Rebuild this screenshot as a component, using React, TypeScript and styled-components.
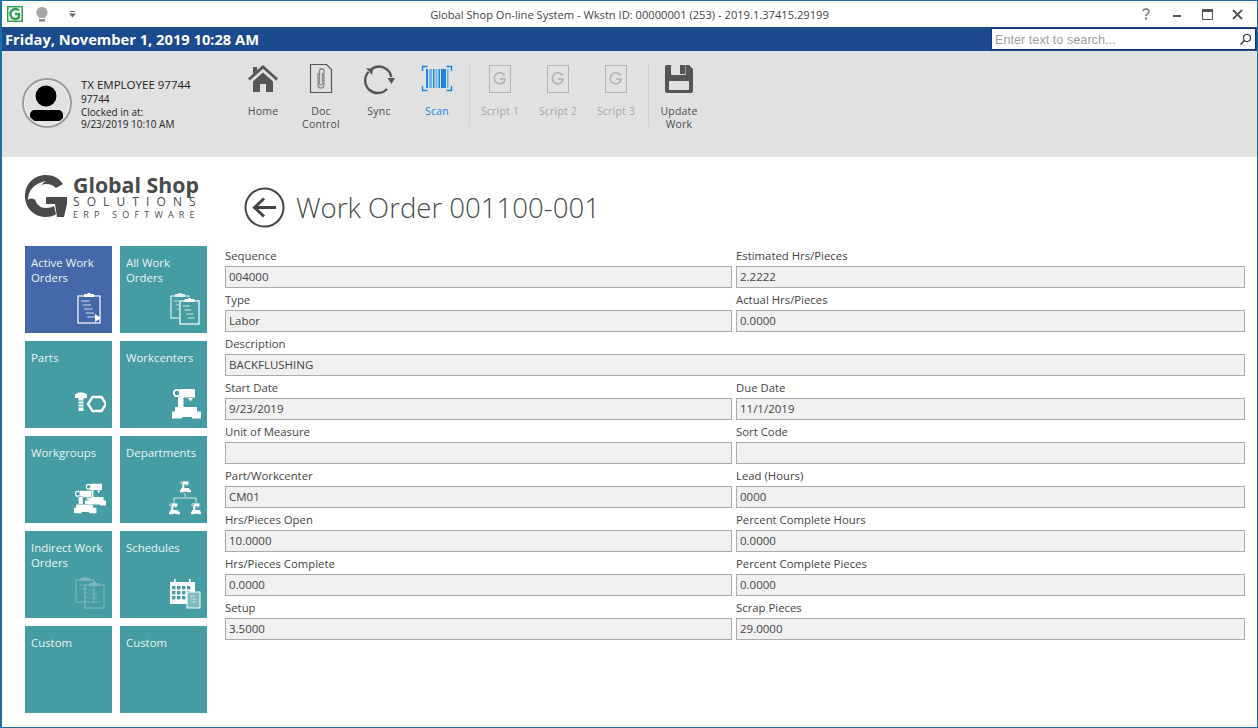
import React from 'react';
import styled, { createGlobalStyle } from 'styled-components';

const GlobalStyle = createGlobalStyle`
  html, body {
    margin: 0;
    padding: 0;
    height: 100%;
    background: #fff;
  }
  * {
    box-sizing: border-box;
  }
`;

const FONT = `"Open Sans", "Noto Sans", "Liberation Sans", sans-serif`;

const Win = styled.div`
  width: 1258px;
  height: 728px;
  border: 1px solid #1a6fa8;
  border-left-width: 2px;
  display: flex;
  flex-direction: column;
  overflow: hidden;
  background: #fff;
  font-family: ${FONT};
`;

const TitleBar = styled.div`
  height: 26px;
  flex: none;
  display: grid;
  grid-template-columns: 1fr auto 1fr;
  align-items: center;
  background: #fff;
`;

const QuickBar = styled.div`
  display: flex;
  align-items: center;
  padding-left: 5px;
  height: 100%;
`;

const QuickSlot = styled.div<{ $w: number }>`
  width: ${(p) => p.$w}px;
  display: flex;
  align-items: center;
  justify-content: center;
`;

const WinTitle = styled.div`
  font-size: 11.15px;
  color: #444;
  white-space: nowrap;
`;

const WinButtons = styled.div`
  display: flex;
  justify-content: flex-end;
  padding-right: 4px;
`;

const WinButton = styled.div`
  width: 30.5px;
  height: 22px;
  display: flex;
  align-items: center;
  justify-content: center;
`;

const DateBar = styled.div`
  height: 24px;
  flex: none;
  background: #1b4a8f;
  display: flex;
  align-items: center;
  justify-content: space-between;
  padding: 0 1px 0 3px;
`;

const DateText = styled.div`
  color: #fff;
  font-size: 14.7px;
  font-weight: 700;
`;

const SearchBox = styled.div`
  width: 265px;
  height: 22px;
  background: #fff;
  border: 1px solid #12366c;
  display: flex;
  align-items: center;
  justify-content: space-between;
  padding: 1px 3px 0 3px;
  font-family: "Liberation Sans", sans-serif;
  font-size: 12.7px;
  color: #a0a0a0;
`;

const Toolbar = styled.div`
  height: 106px;
  flex: none;
  background: #e1e1e1;
  display: flex;
  padding-top: 12px;
`;

const UserBlock = styled.div`
  width: 232px;
  flex: none;
  display: flex;
  align-items: flex-start;
  padding: 15px 0 0 20px;
  gap: 9px;
`;

const Avatar = styled.div`
  width: 50px;
  height: 50px;
  flex: none;
`;

const UserText = styled.div`
  color: #222;
  font-size: 10px;
  line-height: 12.5px;
  margin-top: -1px;
`;

const UserName = styled.div`
  font-size: 11.5px;
  line-height: 16px;
`;

const ToolItem = styled.div<{ $tone?: 'active' | 'off' }>`
  width: 58px;
  flex: none;
  display: flex;
  flex-direction: column;
  align-items: center;
  color: ${(p) => (p.$tone === 'active' ? '#1a86e0' : p.$tone === 'off' ? '#a6a6a6' : '#4d4d4d')};
`;

const ToolIcon = styled.div`
  height: 32px;
  margin-bottom: 10px;
  display: flex;
`;

const ToolLabel = styled.div`
  font-size: 10.5px;
  line-height: 13px;
  text-align: center;
  letter-spacing: 0.2px;
  white-space: pre-line;
`;

const ToolSep = styled.div`
  width: 1px;
  height: 64px;
  flex: none;
  background: #d2d2d2;
  margin: 0 1px 0 3px;
`;

const Content = styled.div`
  flex: 1;
  display: flex;
  min-height: 0;
`;

const Sidebar = styled.div`
  width: 223px;
  flex: none;
  padding-left: 23px;
  display: flex;
  flex-direction: column;
`;

const LogoRow = styled.div`
  height: 89px;
  flex: none;
  display: flex;
  padding-top: 18px;
  align-items: flex-start;
  gap: 6px;
  color: #4a4a4a;
`;

const LogoText = styled.div`
  display: flex;
  flex-direction: column;
  white-space: nowrap;
`;

const LogoName = styled.div`
  font-size: 21.3px;
  font-weight: 700;
  line-height: 21px;
  margin-top: -1px;
`;

const LogoSub = styled.div`
  font-size: 12px;
  line-height: 13px;
  letter-spacing: 7.1px;
`;

const LogoErp = styled.div`
  font-size: 9px;
  line-height: 13px;
  letter-spacing: 5.2px;
`;

const TileGrid = styled.div`
  display: grid;
  grid-template-columns: 87px 87px;
  grid-auto-rows: 87px;
  gap: 8px;
`;

const Tile = styled.div<{ $active?: boolean }>`
  background: ${(p) => (p.$active ? '#4468a8' : '#459ca3')};
  color: #e9f5f5;
  font-size: 11.4px;
  line-height: 15px;
  padding: 9px 6px 6px 6px;
  display: flex;
  flex-direction: column;
  justify-content: space-between;
  white-space: nowrap;
`;

const TileIcon = styled.svg`
  width: 40px;
  height: 40px;
  align-self: flex-end;
  flex: none;
`;

const Main = styled.div`
  flex: 1;
  min-width: 0;
  padding-right: 11px;
  display: flex;
  flex-direction: column;
`;

const Heading = styled.div`
  height: 88px;
  flex: none;
  display: flex;
  align-items: center;
  padding: 12px 0 0 19px;
  gap: 11px;
`;

const HeadingText = styled.h1`
  margin: 0;
  font-size: 27.6px;
  font-weight: 300;
  color: #4a4a4a;
  white-space: nowrap;
`;

const Form = styled.div`
  display: grid;
  grid-template-columns: 507px 509px;
  column-gap: 4px;
  grid-auto-rows: 44px;
`;

const Field = styled.div<{ $wide?: boolean }>`
  grid-column: ${(p) => (p.$wide ? '1 / -1' : 'auto')};
  display: flex;
  flex-direction: column;
`;

const FieldLabel = styled.label`
  height: 21px;
  font-size: 11.35px;
  line-height: 21px;
  color: #444;
`;

const FieldInput = styled.input`
  height: 22px;
  width: 100%;
  background: #f0f0f0;
  border: 1px solid #ababab;
  padding: 0 3px 2px;
  font-family: ${FONT};
  font-size: 11.5px;
  color: #444;
  outline: none;
`;

const Clipboard = ({ x, y, w, h, stroke = '#fff', fill = 'none' }: { x: number; y: number; w: number; h: number; stroke?: string; fill?: string }) => (
  <g stroke={stroke} fill={fill}>
    <rect x={x} y={y + 3} width={w} height={h - 3} strokeWidth="1.2" />
    <rect x={x + w / 2 - 5} y={y + 1} width={10} height={3} fill={stroke} stroke="none" />
    <rect x={x + w / 2 - 1.5} y={y} width={3} height={2} fill={stroke} stroke="none" />
    {[8, 12, 16, 20, 24].map((d, i) =>
      y + d < y + h - 2 ? (
        <line key={d} x1={x + 3 + i * 1.6} x2={x + w * 0.52 + i * 1.6} y1={y + d} y2={y + d} strokeWidth="1" opacity="0.8" />
      ) : null,
    )}
  </g>
);

const Machine = ({ x, y, s = 1, edge }: { x: number; y: number; s?: number; edge?: boolean }) => (
  <g transform={`translate(${x} ${y}) scale(${s})`} fill="#fff" stroke={edge ? '#459ca3' : 'none'} strokeWidth={edge ? 1.2 : 0} style={{ paintOrder: 'stroke' }}>
    <circle cx="5" cy="5" r="3.2" fill="none" stroke="#fff" strokeWidth="1.8" />
    <rect x="8" y="1" width="15" height="8.5" />
    <path d="M16 10h5l-2.5 3.500z" />
    <rect x="6" y="9" width="5.500" height="11" />
    <path d="M3 19h22v4.500h4.500v7H20v-1.500H10v1.500H0v-7h3z" />
  </g>
);

const Icons: Record<string, React.ReactNode> = {
  active: (
    <>
      <Clipboard x={12} y={6} w={22} h={30} />
      <path d="M29 27l6 4-6 4z" fill="#fff" />
    </>
  ),
  all: (
    <>
      <g opacity="0.85">
        <Clipboard x={10} y={6} w={18} h={25} />
      </g>
      <rect x="18" y="10" width="20" height="27" fill="#459ca3" />
      <Clipboard x={19} y={11} w={19} h={26} />
    </>
  ),
  parts: (
    <>
      <path d="M9 13c1-2 3-2.500 6-2.500s5 .5 6 2.500v3h-3.500v13h-5V16H9z" fill="#fff" />
      <path d="M12 19h6M12 22h6M12 25h6" stroke="#459ca3" strokeWidth="1" />
      <path d="M26.500 15h9l4.500 7-4.500 7h-9L22 22z" fill="none" stroke="#fff" strokeWidth="2.400" />
    </>
  ),
  workcenter: <Machine x={11} y={6} />,
  workgroup: (
    <>
      <Machine x={19} y={6} s={0.74} />
      <Machine x={8} y={13} s={0.76} edge />
    </>
  ),
  department: (
    <>
      <Machine x={19} y={4} s={0.37} />
      <path d="M24 16v4M13 26v-5h22v5" stroke="#cfe6e8" strokeWidth="1" fill="none" />
      <Machine x={8} y={26} s={0.37} />
      <Machine x={30} y={26} s={0.37} />
    </>
  ),
  indirect: (
    <g opacity="0.28">
      <Clipboard x={10} y={5} w={18} h={25} />
      <Clipboard x={19} y={10} w={19} h={26} />
    </g>
  ),
  schedule: (
    <>
      <rect x="9" y="10" width="25" height="22" fill="#fff" />
      <rect x="13" y="7" width="1.600" height="5" fill="#fff" />
      <rect x="28" y="7" width="1.600" height="5" fill="#fff" />
      {[14, 19, 24].map((y) =>
        [11, 16, 21, 26].map((x) => <rect key={`${x}-${y}`} x={x} y={y} width="3.400" height="3.400" fill="#459ca3" />),
      )}
      <rect x="26" y="20" width="13" height="16" fill="#7fbcc1" stroke="#fff" strokeWidth="1" />
      <path d="M29 24h5M30 27h5M31 30h4" stroke="#cfe6e8" strokeWidth="0.8" />
    </>
  ),
};

const tiles: { label: React.ReactNode; icon?: string; active?: boolean }[] = [
  { label: <>Active Work<br />Orders</>, icon: 'active', active: true },
  { label: <>All Work<br />Orders</>, icon: 'all' },
  { label: 'Parts', icon: 'parts' },
  { label: 'Workcenters', icon: 'workcenter' },
  { label: 'Workgroups', icon: 'workgroup' },
  { label: 'Departments', icon: 'department' },
  { label: <>Indirect Work<br />Orders</>, icon: 'indirect' },
  { label: 'Schedules', icon: 'schedule' },
  { label: 'Custom' },
  { label: 'Custom' },
];

const fields: { label: string; value: string; wide?: boolean }[] = [
  { label: 'Sequence', value: '004000' },
  { label: 'Estimated Hrs/Pieces', value: '2.2222' },
  { label: 'Type', value: 'Labor' },
  { label: 'Actual Hrs/Pieces', value: '0.0000' },
  { label: 'Description', value: 'BACKFLUSHING', wide: true },
  { label: 'Start Date', value: '9/23/2019' },
  { label: 'Due Date', value: '11/1/2019' },
  { label: 'Unit of Measure', value: '' },
  { label: 'Sort Code', value: '' },
  { label: 'Part/Workcenter', value: 'CM01' },
  { label: 'Lead (Hours)', value: '0000' },
  { label: 'Hrs/Pieces Open', value: '10.0000' },
  { label: 'Percent Complete Hours', value: '0.0000' },
  { label: 'Hrs/Pieces Complete', value: '0.0000' },
  { label: 'Percent Complete Pieces', value: '0.0000' },
  { label: 'Setup', value: '3.5000' },
  { label: 'Scrap Pieces', value: '29.0000' },
];

const ScriptIcon = () => (
  <svg width="32" height="32" viewBox="0 0 32 32">
    <rect x="5.500" y="2.500" width="21" height="27" fill="none" stroke="#b4b4b4" />
    <path d="M20.500 12.500A5.500 5.500 0 1 0 21 17v-1h-5" fill="none" stroke="#b0b0b0" strokeWidth="1.500" />
  </svg>
);

const App: React.FC = () => {
  return (
    <Win>
      <GlobalStyle />
      <TitleBar>
        <QuickBar>
          <QuickSlot $w={16}>
            <svg width="16" height="16" viewBox="0 0 16 16">
              <rect width="16" height="16" fill="#2e9e4f" />
              <rect x="1.500" y="1.500" width="13" height="13" fill="#fff" />
              <path d="M12 4.500A5 5 0 1 0 12 11.500V8H8" fill="none" stroke="#2e9e4f" strokeWidth="2.400" />
            </svg>
          </QuickSlot>
          <QuickSlot $w={38}>
            <svg width="12" height="15" viewBox="0 0 12 15">
              <path d="M6 0a5.500 5.500 0 0 1 3.500 9.800V11h-7V9.800A5.500 5.500 0 0 1 6 0z" fill="#a6a6a6" />
              <rect x="3" y="12" width="6" height="2.600" fill="#8c8c8c" />
            </svg>
          </QuickSlot>
          <QuickSlot $w={22}>
            <svg width="7" height="7" viewBox="0 0 7 7">
              <rect x="1" y="0" width="5" height="1" fill="#666" />
              <path d="M0 2.500h7L3.500 6.500z" fill="#666" />
            </svg>
          </QuickSlot>
        </QuickBar>
        <WinTitle>Global Shop On-line System - Wkstn ID: 00000001 (253) - 2019.1.37415.29199</WinTitle>
        <WinButtons>
          <WinButton>
            <svg width="10" height="12" viewBox="0 0 10 12">
              <path d="M2 3.200C2.300 1.700 3.400 1 5 1c1.700 0 3 1 3 2.500C8 5.600 5 5.500 5 8" fill="none" stroke="#777" strokeWidth="1.500" />
              <rect x="4" y="9.500" width="2" height="2" fill="#777" />
            </svg>
          </WinButton>
          <WinButton>
            <svg width="10" height="10" viewBox="0 0 10 10">
              <rect x="1" y="6" width="8" height="2" fill="#555" />
            </svg>
          </WinButton>
          <WinButton>
            <svg width="11" height="11" viewBox="0 0 11 11">
              <rect x="0.500" y="0.500" width="10" height="10" fill="none" stroke="#555" />
              <rect x="0.500" y="0.500" width="10" height="2.500" fill="#555" />
            </svg>
          </WinButton>
          <WinButton>
            <svg width="11" height="11" viewBox="0 0 11 11">
              <path d="M1 1l9 9M10 1l-9 9" stroke="#555" strokeWidth="1.800" />
            </svg>
          </WinButton>
        </WinButtons>
      </TitleBar>

      <DateBar>
        <DateText>Friday, November 1, 2019 10:28 AM</DateText>
        <SearchBox>
          Enter text to search...
          <svg width="13" height="13" viewBox="0 0 13 13">
            <circle cx="8" cy="5" r="3.500" fill="none" stroke="#333" strokeWidth="1.200" />
            <path d="M5.500 7.500L1.500 11.500" stroke="#333" strokeWidth="1.500" />
          </svg>
        </SearchBox>
      </DateBar>

      <Toolbar>
        <UserBlock>
          <Avatar>
            <svg width="50" height="50" viewBox="0 0 50 50">
              <defs>
                <clipPath id="avatarClip">
                  <circle cx="25" cy="25" r="22" />
                </clipPath>
              </defs>
              <circle cx="25" cy="25" r="24" fill="#f4f4f4" stroke="#9b9b9b" strokeWidth="2" />
              <circle cx="25" cy="25" r="22" fill="#e2e2e2" />
              <circle cx="24" cy="18" r="10.500" fill="#000" />
              <g clipPath="url(#avatarClip)">
                <path d="M8 43v-6c0-3 2-5 5-5h23c3 0 5 2 5 5v6z" fill="#000" />
              </g>
            </svg>
          </Avatar>
          <UserText>
            <UserName>TX EMPLOYEE 97744</UserName>
            97744
            <br />
            Clocked in at:
            <br />
            9/23/2019 10:10 AM
          </UserText>
        </UserBlock>

        <ToolItem>
          <ToolIcon>
            <svg width="32" height="32" viewBox="0 0 32 32">
              <path d="M16 2L1 15.500l1.800 2L16 5.800l13.200 11.700 1.800-2z" fill="#555" />
              <path d="M6 4h4v3.500L6 11z" fill="#555" />
              <path d="M6 18.500L16 9.500l10 9V29h-7v-8h-6v8H6z" fill="#555" />
            </svg>
          </ToolIcon>
          <ToolLabel>Home</ToolLabel>
        </ToolItem>
        <ToolItem>
          <ToolIcon>
            <svg width="32" height="32" viewBox="0 0 32 32">
              <path d="M5.500 1.500h16l5 5v23h-21z" fill="none" stroke="#555" strokeWidth="1.200" />
              <path d="M13 10v12c0 4 6 4 6 0V8c0-3-4.500-3-4.500 0v13c0 1.500 3 1.500 3 0V10" fill="none" stroke="#8c8c8c" strokeWidth="1.300" />
            </svg>
          </ToolIcon>
          <ToolLabel>{'Doc\nControl'}</ToolLabel>
        </ToolItem>
        <ToolItem>
          <ToolIcon>
            <svg width="32" height="32" viewBox="0 0 32 32">
              <path d="M8 6.500A12.500 12.500 0 0 1 28.300 14" fill="none" stroke="#555" strokeWidth="2.400" />
              <path d="M24.500 15h7.500l-3.500 6z" fill="#555" />
              <path d="M24 26A12.500 12.500 0 0 1 5.500 9" fill="none" stroke="#555" strokeWidth="2.400" />
              <path d="M3 5l7 1-1 6z" fill="#555" />
            </svg>
          </ToolIcon>
          <ToolLabel>Sync</ToolLabel>
        </ToolItem>
        <ToolItem $tone="active">
          <ToolIcon>
            <svg width="32" height="32" viewBox="0 0 32 32">
              <path d="M1.500 8V3.500h5M25.500 3.500h5V8M1.500 23v4.500h5M25.500 27.500h5V23" fill="none" stroke="#1a86e0" strokeWidth="1.400" />
              <rect x="5" y="6" width="2" height="19" fill="#1a86e0" />
              <rect x="8" y="6" width="3" height="19" fill="#6db4ef" />
              <rect x="12" y="6" width="1.500" height="19" fill="#1a86e0" />
              <rect x="14.500" y="6" width="2" height="19" fill="#6db4ef" />
              <rect x="17.500" y="6" width="1.500" height="19" fill="#1a86e0" />
              <rect x="20" y="6" width="5" height="19" fill="#1a86e0" />
              <rect x="26" y="6" width="1.500" height="19" fill="#6db4ef" />
            </svg>
          </ToolIcon>
          <ToolLabel>Scan</ToolLabel>
        </ToolItem>
        <ToolSep />
        {['Script 1', 'Script 2', 'Script 3'].map((s) => (
          <ToolItem key={s} $tone="off">
            <ToolIcon>
              <ScriptIcon />
            </ToolIcon>
            <ToolLabel>{s}</ToolLabel>
          </ToolItem>
        ))}
        <ToolSep />
        <ToolItem>
          <ToolIcon>
            <svg width="32" height="32" viewBox="0 0 32 32">
              <path d="M4 2h22l4 4v22a2 2 0 0 1-2 2H4a2 2 0 0 1-2-2V4a2 2 0 0 1 2-2z" fill="#555" />
              <rect x="8" y="2" width="15" height="10" rx="1" fill="#e1e1e1" />
              <rect x="17" y="2" width="5.500" height="9" fill="#555" />
              <rect x="6" y="18" width="20" height="9" rx="1" fill="#e1e1e1" />
            </svg>
          </ToolIcon>
          <ToolLabel>{'Update\nWork'}</ToolLabel>
        </ToolItem>
      </Toolbar>

      <Content>
        <Sidebar>
          <LogoRow>
            <svg width="42" height="42" viewBox="0 0 42 42" style={{ flex: 'none' }}>
              <path d="M38 9C34 3 28 0 21 0 9 0 0 9 0 21c0 12 9 21 21 21 4 0 8-1 10-3l-2-8c-2 1-5 2-8 2-7 0-11-5-11-11S14 9 21 9c4 0 7 1 10 4z" fill="#4a4a4a" />
              <path d="M21 22h21v7l-3 13h-7l-2-13h-9z" fill="#4a4a4a" />
              <path d="M3 25C3 15 10 8 21 6 15 10 11 16 10 25c-2-2-5-2-7 0z" fill="#fff" />
            </svg>
            <LogoText>
              <LogoName>Global Shop</LogoName>
              <LogoSub>SOLUTIONS</LogoSub>
              <LogoErp>ERP SOFTWARE</LogoErp>
            </LogoText>
          </LogoRow>
          <TileGrid>
            {tiles.map((t, i) => (
              <Tile key={i} $active={t.active}>
                <div>{t.label}</div>
                {t.icon && <TileIcon viewBox="0 0 40 40">{Icons[t.icon]}</TileIcon>}
              </Tile>
            ))}
          </TileGrid>
        </Sidebar>
        <Main>
          <Heading>
            <svg width="41" height="41" viewBox="0 0 41 41" style={{ flex: 'none' }}>
              <circle cx="20.500" cy="20.500" r="19" fill="none" stroke="#444" strokeWidth="2" />
              <path d="M32 20.500H11M20 11.500l-9.500 9 9.500 9" fill="none" stroke="#444" strokeWidth="3" />
            </svg>
            <HeadingText>Work Order 001100-001</HeadingText>
          </Heading>
          <Form>
            {fields.map((f) => (
              <Field key={f.label} $wide={f.wide}>
                <FieldLabel>{f.label}</FieldLabel>
                <FieldInput readOnly value={f.value} />
              </Field>
            ))}
          </Form>
        </Main>
      </Content>
    </Win>
  );
};

export default App;
